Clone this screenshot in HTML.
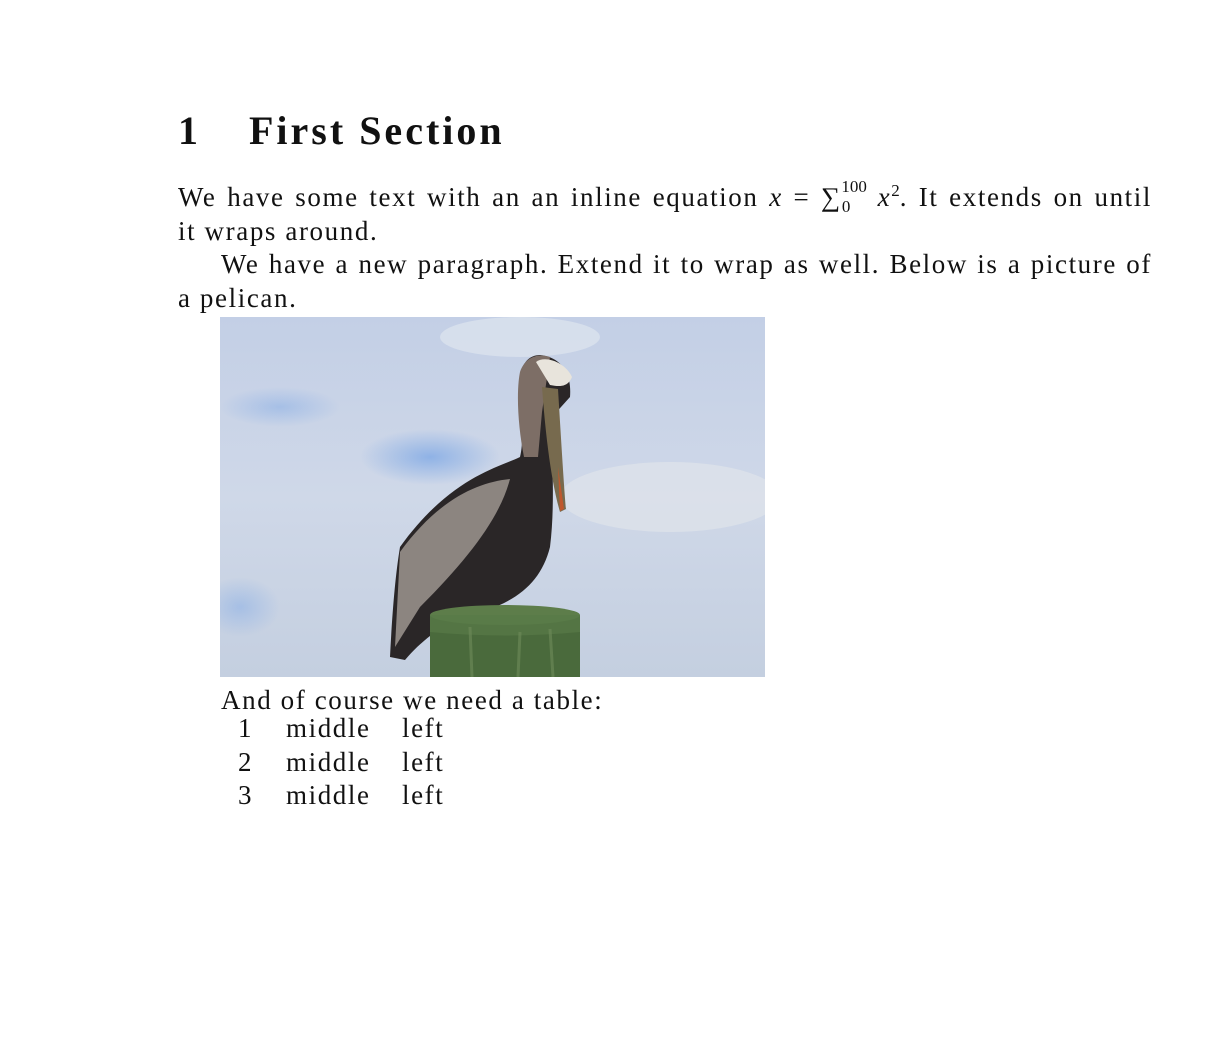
<!DOCTYPE html>
<html><head><style>
body{margin:0;background:#fff;width:1216px;height:1044px;position:relative;font-family:"Liberation Serif",serif;color:#111;}
.t{position:absolute;left:178px;width:974px;font-size:27px;letter-spacing:1.6px;line-height:33.5px;white-space:nowrap}
h1{position:absolute;left:178px;top:107px;margin:0;font-size:40px;letter-spacing:3px;font-weight:bold;}
.j{text-align:justify;text-align-last:justify;display:block;width:974px}
i{font-style:italic}
sup,sub{font-size:17px;line-height:0;letter-spacing:0}
</style></head><body>
<h1>1<span style="display:inline-block;width:48px"></span>First Section</h1>
<div class="t" style="top:181px">
<span class="j">We have some text with an an inline equation <i>x</i> = ∑<sub style="vertical-align:-6px">0</sub><sup style="vertical-align:14px;margin-left:-9px">100</sup> <i>x</i><sup style="vertical-align:10px">2</sup>. It extends on until</span>
<span style="display:block">it wraps around.</span>
<span class="j" style="padding-left:43px;width:931px">We have a new paragraph. Extend it to wrap as well. Below is a picture of</span>
<span style="display:block">a pelican.</span>
</div>
<svg style="position:absolute;left:220px;top:317px" width="545" height="360" viewBox="0 0 545 360">
<defs>
<linearGradient id="s" x1="0" y1="0" x2="0" y2="1"><stop offset="0" stop-color="#c3cfe6"/><stop offset="0.5" stop-color="#cfd8e8"/><stop offset="1" stop-color="#c4cfe0"/></linearGradient>
<radialGradient id="b1" cx="0.5" cy="0.5" r="0.5"><stop offset="0" stop-color="#8fb2e6"/><stop offset="1" stop-color="#8fb2e6" stop-opacity="0"/></radialGradient>
</defs>
<rect width="545" height="360" fill="url(#s)"/>
<ellipse cx="210" cy="140" rx="70" ry="28" fill="url(#b1)"/>
<ellipse cx="60" cy="90" rx="60" ry="20" fill="url(#b1)" opacity=".6"/>
<ellipse cx="20" cy="290" rx="40" ry="30" fill="url(#b1)" opacity=".6"/>
<ellipse cx="300" cy="20" rx="80" ry="20" fill="#dbe2ee" opacity=".8"/>
<ellipse cx="450" cy="180" rx="110" ry="35" fill="#dde2ea" opacity=".8"/>
<path d="M180 230 C230 160 280 150 300 140 C305 120 300 90 300 60 C302 45 310 38 320 38 C340 40 352 55 350 80 L332 100 C332 150 335 190 330 230 C320 270 290 290 240 300 C220 310 200 325 185 343 L170 340 C172 300 175 260 180 230Z" fill="#2a2627"/>
<path d="M180 235 C220 180 260 165 290 162 C280 200 250 240 200 290 L175 330 Z" fill="#8c8580"/>
<path d="M304 140 C298 110 296 75 300 55 C305 40 318 36 330 40 L322 95 L318 140Z" fill="#7d6e66"/>
<path d="M316 45 C325 38 345 45 352 60 C348 70 340 70 330 68 Z" fill="#e8e4dc"/>
<path d="M322 70 L338 72 C341 120 344 170 346 192 L340 195 C330 160 325 110 322 70Z" fill="#776a4e"/>
<path d="M338 150 L344 192 L340 194 Z" fill="#c0572c"/>
<path d="M210 298 L360 298 L360 360 L210 360 Z" fill="#4a6a3c"/>
<ellipse cx="285" cy="298" rx="75" ry="10" fill="#5d7d4a"/>
<path d="M210 298 L360 298 L360 315 Q285 322 210 315Z" fill="#587a47" opacity=".7"/>
<path d="M250 310 L252 360 M300 315 L298 360 M330 312 L333 360" stroke="#6f8c5a" stroke-width="3" opacity=".6"/>
</svg>
<div class="t" style="top:684px;left:221px">And of course we need a table:</div>
<div class="t" style="top:712px;left:238px">1<span style="position:absolute;left:48px">middle</span><span style="position:absolute;left:164px">left</span></div>
<div class="t" style="top:746px;left:238px">2<span style="position:absolute;left:48px">middle</span><span style="position:absolute;left:164px">left</span></div>
<div class="t" style="top:779px;left:238px">3<span style="position:absolute;left:48px">middle</span><span style="position:absolute;left:164px">left</span></div>
</body></html>
